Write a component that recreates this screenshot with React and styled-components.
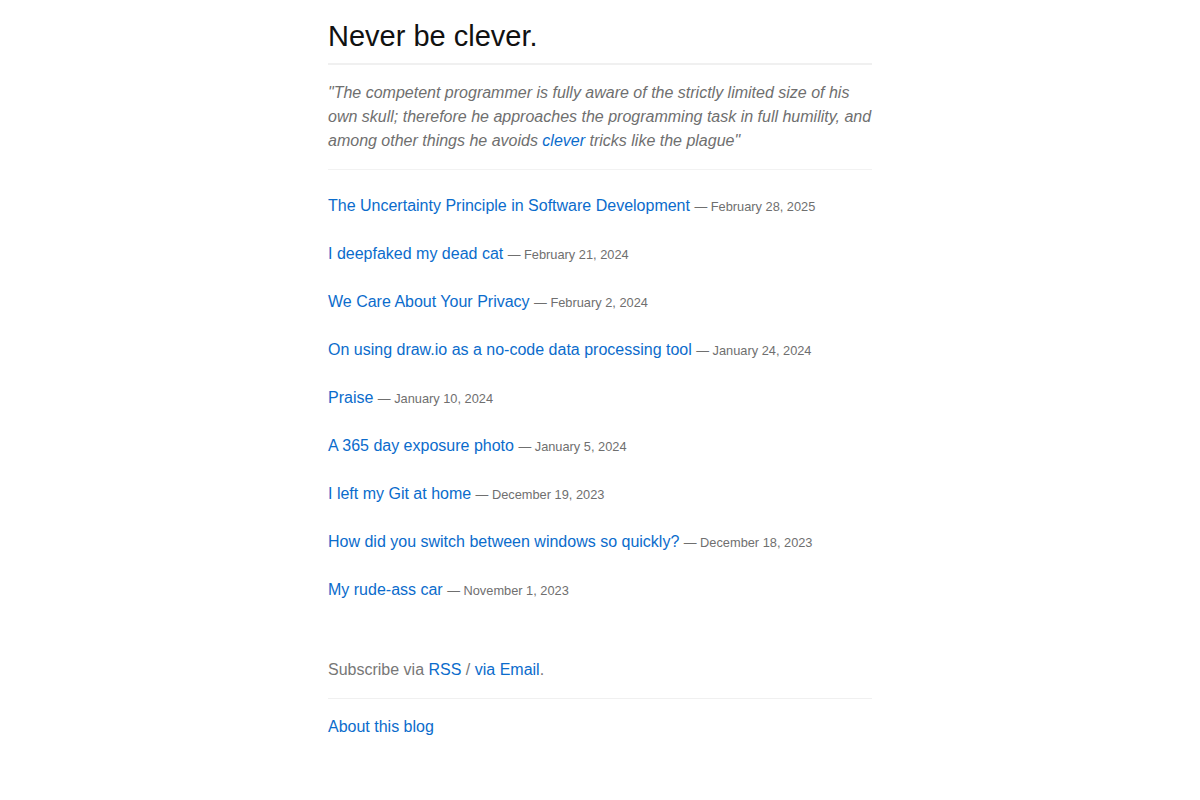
import React from "react";
import styled, { createGlobalStyle } from "styled-components";

const GlobalStyle = createGlobalStyle`
  body {
    margin: 0;
    background: #ffffff;
    font-family: "Liberation Sans", Arial, sans-serif;
    font-size: 16px;
    color: #111;
  }
  a {
    color: #0b6ccc;
    text-decoration: none;
  }
`;

const Pagina = styled.div`
  width: 544px;
  margin: 0 auto;
  padding-top: 17px;
`;

const Cabecalho = styled.header`
  border-bottom: 2px solid #f0f0f0;
  padding-bottom: 8px;
`;

const Titulo = styled.h1`
  margin: 0;
  font-size: 29px;
  font-weight: normal;
  line-height: 38px;
  color: #111;
`;

const Citacao = styled.p`
  margin: 0;
  padding: 16px 0 16px;
  font-style: italic;
  line-height: 24px;
  color: #6f6f6f;
  border-bottom: 1px solid #f2f2f2;
`;

const ListaPosts = styled.ul`
  list-style: none;
  margin: 0;
  padding: 24px 0 0;
`;

const ItemPost = styled.li`
  height: 24px;
  line-height: 24px;
  margin-bottom: 24px;
`;

const Data = styled.span`
  font-size: 12.8px;
  line-height: 1;
  color: #6f6f6f;
`;

const Rodape = styled.footer`
  margin-top: 56px;
`;

const Assinar = styled.p`
  margin: 0;
  line-height: 24px;
  padding-bottom: 16px;
  color: #777;
  border-bottom: 1px solid #f0f0f0;
`;

const Sobre = styled.p`
  margin: 0;
  padding-top: 16px;
  line-height: 24px;
`;

const posts = [
  { titulo: "The Uncertainty Principle in Software Development", data: "February 28, 2025" },
  { titulo: "I deepfaked my dead cat", data: "February 21, 2024" },
  { titulo: "We Care About Your Privacy", data: "February 2, 2024" },
  { titulo: "On using draw.io as a no-code data processing tool", data: "January 24, 2024" },
  { titulo: "Praise", data: "January 10, 2024" },
  { titulo: "A 365 day exposure photo", data: "January 5, 2024" },
  { titulo: "I left my Git at home", data: "December 19, 2023" },
  { titulo: "How did you switch between windows so quickly?", data: "December 18, 2023" },
  { titulo: "My rude-ass car", data: "November 1, 2023" },
];

export default function App() {
  return (
    <>
      <GlobalStyle />
      <Pagina>
        <Cabecalho>
          <Titulo>Never be clever.</Titulo>
        </Cabecalho>
        <Citacao>
          "The competent programmer is fully aware of the strictly limited size of his own
          skull; therefore he approaches the programming task in full humility, and among
          other things he avoids <a href="#">clever</a> tricks like the plague"
        </Citacao>
        <ListaPosts>
          {posts.map((post) => (
            <ItemPost key={post.titulo}>
              <a href="#">{post.titulo}</a> <Data>— {post.data}</Data>
            </ItemPost>
          ))}
        </ListaPosts>
        <Rodape>
          <Assinar>
            Subscribe via <a href="#">RSS</a> / <a href="#">via Email</a>.
          </Assinar>
          <Sobre>
            <a href="#">About this blog</a>
          </Sobre>
        </Rodape>
      </Pagina>
    </>
  );
}
